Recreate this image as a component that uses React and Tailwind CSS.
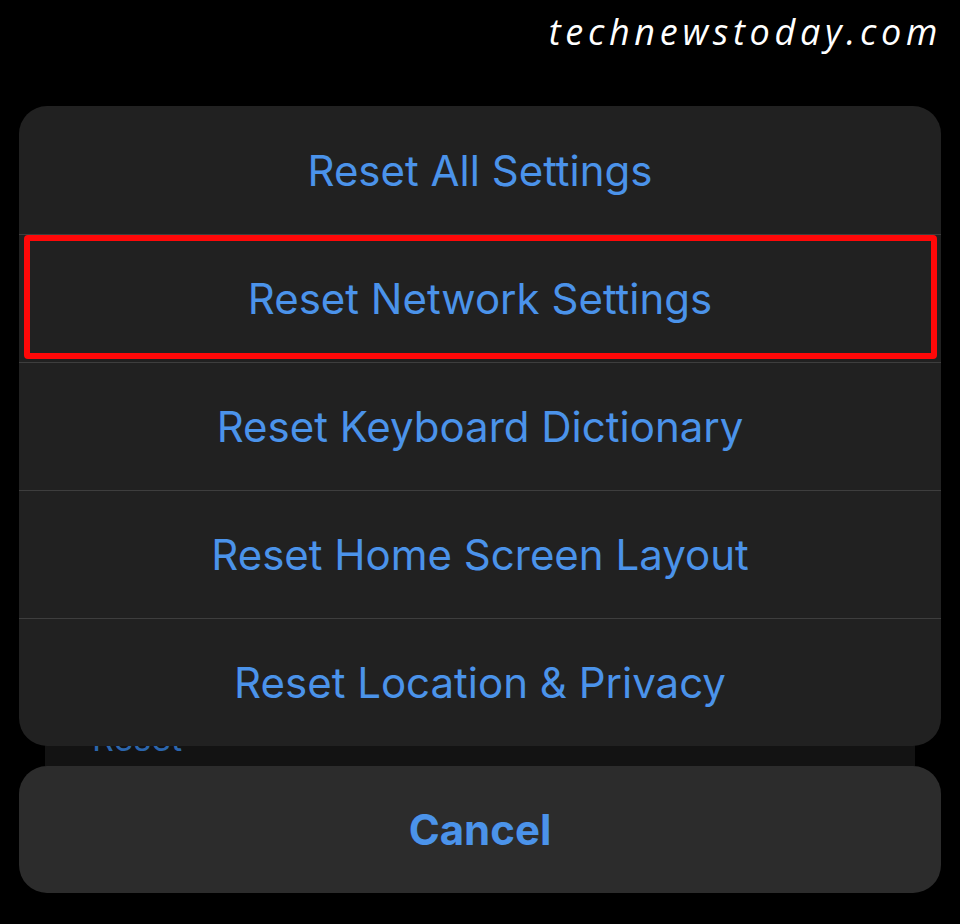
const rows = [
  "Reset All Settings",
  "Reset Network Settings",
  "Reset Keyboard Dictionary",
  "Reset Home Screen Layout",
  "Reset Location & Privacy",
];

export default function App() {
  return (
    <div
      className="w-[960px] h-[924px] bg-black overflow-hidden"
      style={{ fontFamily: "Inter, 'Liberation Sans', sans-serif" }}
    >
      {/* watermark */}
      <div className="h-[106px] pr-[18px] pt-[10px] text-right">
        <span
          className="text-white italic text-[36px] tracking-[0.13em] leading-[44px]"
          style={{ fontFamily: "'Open Sans', sans-serif" }}
        >
          technewstoday.com
        </span>
      </div>

      <div className="px-[19px]">
        {/* action list */}
        <div className="relative z-10 bg-[#212121] rounded-[28px] overflow-hidden">
          {rows.map((label, i) => (
            <div
              key={label}
              className={
                "relative h-[128px] flex items-center justify-center text-[#4b93ea] text-[42px] " +
                (i > 0 ? "border-t border-[#3e3e3e]" : "")
              }
            >
              {label}
              {i === 1 && (
                <div className="absolute left-[5px] right-[4px] top-0 bottom-[3px] border-[6px] border-[#ff0808] rounded-[4px]" />
              )}
            </div>
          ))}
        </div>

        {/* sheet underneath */}
        <div className="-mt-[40px] mx-[26px] h-[60px] bg-[#131313] rounded-t-[20px] pl-[47px] pt-[16px]">
          <span className="text-[#2c66ad] text-[34px] leading-[34px]">Reset</span>
        </div>

        {/* cancel */}
        <div className="h-[127px] bg-[#2c2c2c] rounded-[28px] flex items-center justify-center">
          <span className="text-[#4b93ea] text-[42px] font-bold">Cancel</span>
        </div>
      </div>
    </div>
  );
}
